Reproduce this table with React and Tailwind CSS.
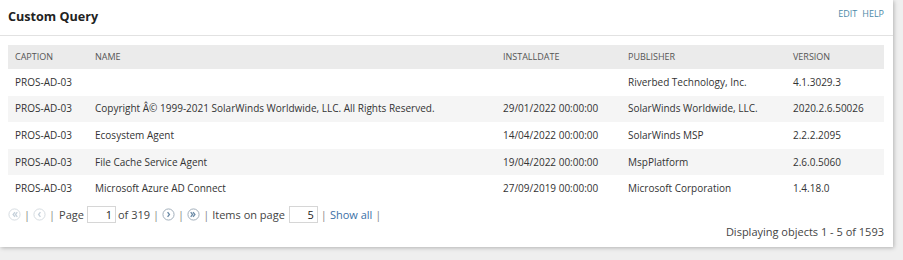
import React from "react";

const rows = [
  ["PROS-AD-03", "", "", "Riverbed Technology, Inc.", "4.1.3029.3"],
  ["PROS-AD-03", "Copyright Â© 1999-2021 SolarWinds Worldwide, LLC. All Rights Reserved.", "29/01/2022 00:00:00", "SolarWinds Worldwide, LLC.", "2020.2.6.50026"],
  ["PROS-AD-03", "Ecosystem Agent", "14/04/2022 00:00:00", "SolarWinds MSP", "2.2.2.2095"],
  ["PROS-AD-03", "File Cache Service Agent", "19/04/2022 00:00:00", "MspPlatform", "2.6.0.5060"],
  ["PROS-AD-03", "Microsoft Azure AD Connect", "27/09/2019 00:00:00", "Microsoft Corporation", "1.4.18.0"],
];

function PagerIcon({ dir, double, active }) {
  const stroke = active ? "#6b8aa6" : "#c5d0da";
  const ring = active ? "#9aa9b6" : "#d3d9df";
  const pts = dir === "left" ? ["7.5,4.5 5.5,7 7.5,9.5", "10,4.5 8,7 10,9.5"] : ["6.5,4.5 8.5,7 6.5,9.5", "4,4.5 6,7 4,9.5"];
  return (
    <svg width="13" height="13" viewBox="0 0 14 14" className="shrink-0">
      <circle cx="7" cy="7" r="6" fill="#fff" stroke={ring} strokeWidth="1" />
      {double ? (
        <>
          <polyline points={pts[0]} fill="none" stroke={stroke} strokeWidth="1.4" />
          <polyline points={pts[1]} fill="none" stroke={stroke} strokeWidth="1.4" />
        </>
      ) : (
        <polyline points={dir === "left" ? "8,4.5 6,7 8,9.5" : "6,4.5 8,7 6,9.5"} fill="none" stroke={stroke} strokeWidth="1.4" />
      )}
    </svg>
  );
}

const Sep = () => <span className="text-[#888] mx-[3px]">|</span>;

export default function App() {
  return (
    <div className="w-[903px] h-[260px] bg-[#efefef] font-['Open_Sans',sans-serif] text-[10px] text-[#333] overflow-hidden">
      <div className="w-[893px] h-[247px] bg-white shadow-[1px_1px_4px_rgba(0,0,0,0.25)] flex flex-col">
        <div className="h-[36px] border-b border-[#e2e2e2] flex items-start justify-between pl-[8px] pr-[9px]">
          <div className="text-[12.6px] font-bold text-[#222] mt-[8px] leading-[18px]">Custom Query</div>
          <div className="flex gap-[5px] text-[9px] text-[#4c8aa8] mt-[8px] leading-[12px]">
            <span>EDIT</span>
            <span>HELP</span>
          </div>
        </div>
        <div className="px-[8px] pt-[9px]">
          <div className="grid grid-cols-[87px_408px_125px_165px_1fr] w-[876px]">
            <div className="contents text-[9px] text-[#555]">
              {["CAPTION", "NAME", "INSTALLDATE", "PUBLISHER", "VERSION"].map((h, i) => (
                <div key={h} className={`bg-[#ebebeb] h-[24px] flex items-center ${i === 0 ? "pl-[7px]" : ""}`}>{h}</div>
              ))}
            </div>
            {rows.map((r, ri) => (
              <div key={ri} className="contents">
                {r.map((c, ci) => (
                  <div key={ci} className={`h-[26.6px] flex items-center whitespace-nowrap ${ri % 2 === 1 ? "bg-[#f5f5f5]" : "bg-white"} ${ci === 0 ? "pl-[7px]" : ""}`}>
                    {c}
                  </div>
                ))}
              </div>
            ))}
          </div>
          <div className="flex items-center h-[22px] mt-[2px] text-[#444] text-[11px]">
            <PagerIcon dir="left" double />
            <Sep />
            <PagerIcon dir="left" />
            <Sep />
            <span className="ml-[1px]">Page</span>
            <input readOnly value="1" className="ml-[3px] w-[29px] h-[17px] border border-[#d6d6d6] text-right pr-[3px] text-[11px] text-[#222] outline-none" />
            <span className="ml-[2px]">of 319</span>
            <Sep />
            <PagerIcon dir="right" active />
            <Sep />
            <PagerIcon dir="right" double active />
            <Sep />
            <span>Items on page</span>
            <input readOnly value="5" className="ml-[4px] w-[29px] h-[17px] border border-[#d6d6d6] text-right pr-[3px] text-[11px] text-[#222] outline-none" />
            <Sep />
            <span className="text-[#3b6fa6]">Show all</span>
            <Sep />
          </div>
          <div className="flex justify-end w-[876px] text-[11px] leading-[14px] text-[#444] mt-[-1px]">Displaying objects 1 - 5 of 1593</div>
        </div>
      </div>
    </div>
  );
}
